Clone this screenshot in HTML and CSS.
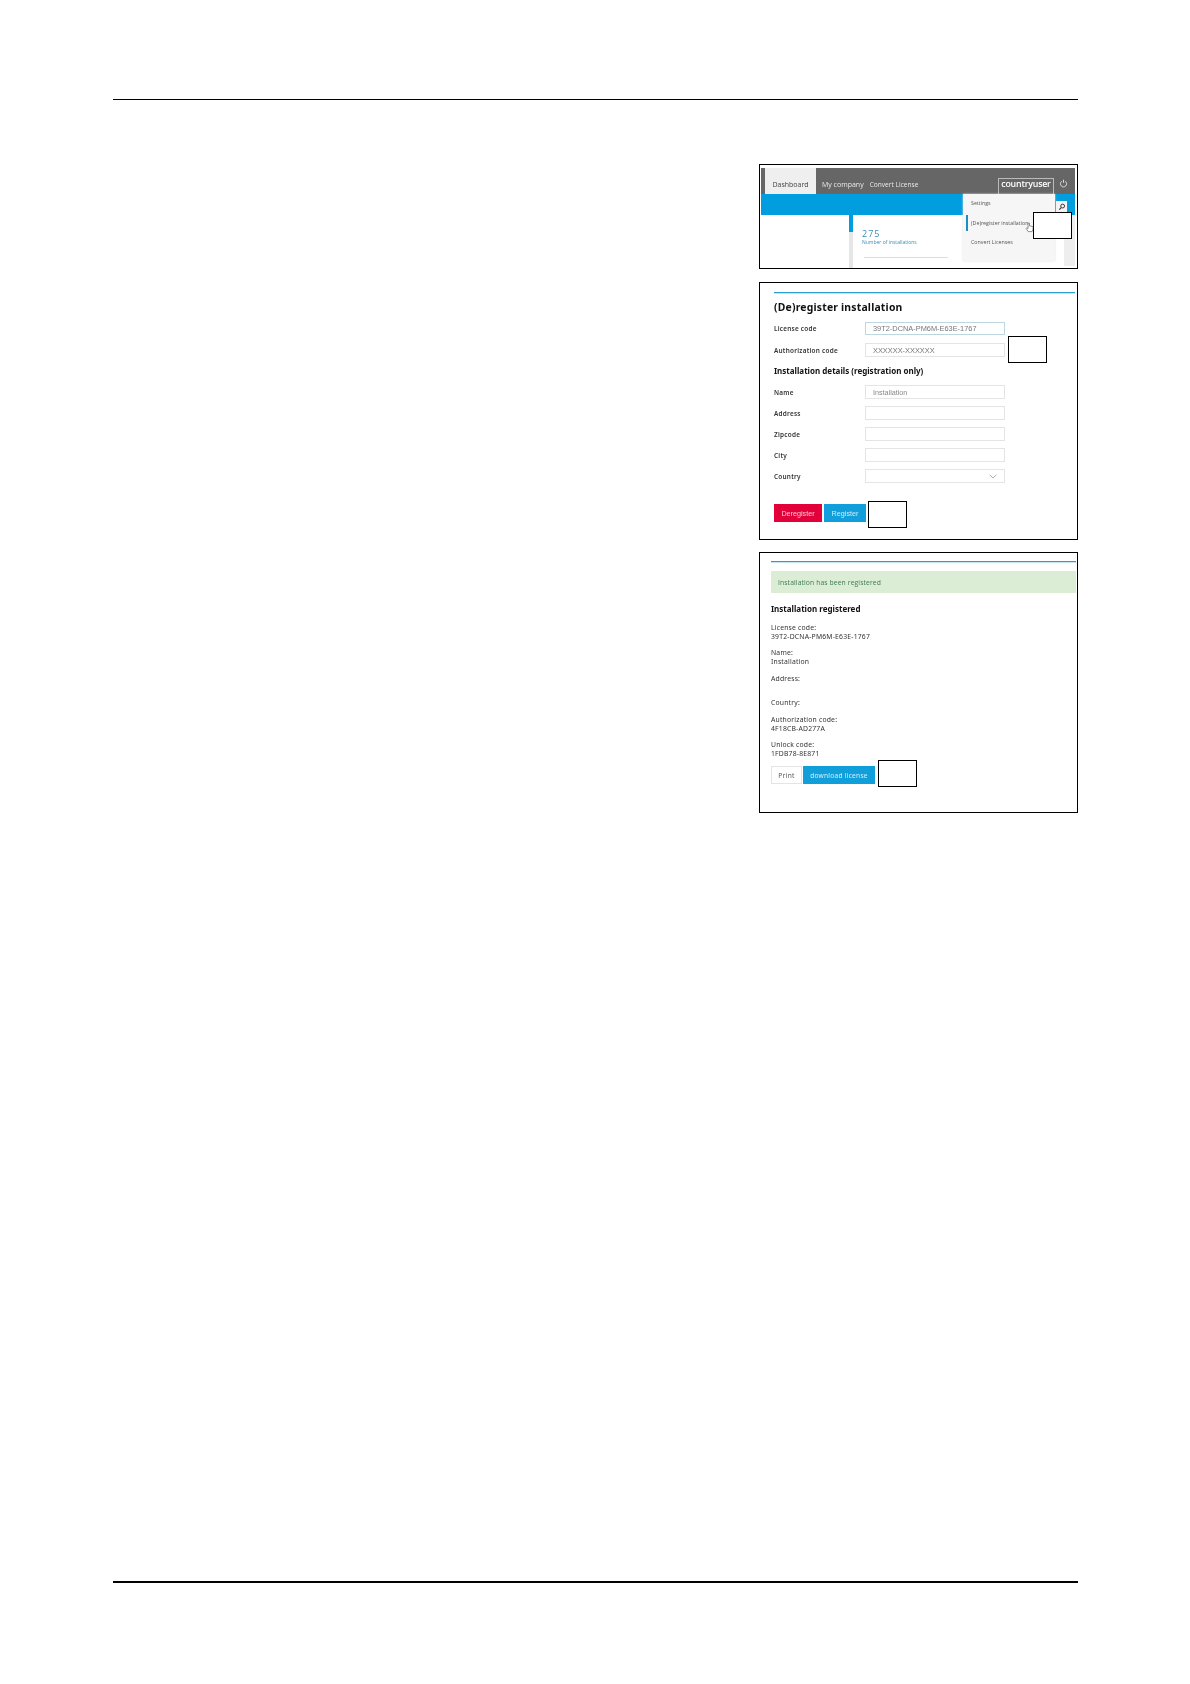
FILE: index.html
```html
<!DOCTYPE html>
<html lang="en">
<head>
<meta charset="utf-8">
<title>(De)register installation</title>
<link rel="stylesheet" href="styles.css">
</head>
<body>
<div class="page">
  <hr class="rule-top">
  <main class="shots">
    <section class="shot shot-dash">
      <div class="topbar">
        <div class="tab">Dashboard</div>
        <div class="nav">My company</div>
        <div class="nav nav-2">Convert License</div>
        <div class="user">countryuser</div>
        <svg class="power" viewBox="0 0 10 10" width="9" height="9"><path d="M3 2.6a3.4 3.4 0 1 0 4 0M5 .8v3.4" fill="none" stroke="#e8e8e8" stroke-width="1"/></svg>
      </div>
      <div class="blueband"></div>
      <div class="dash-body">
        <div class="card">
          <div class="stat">275</div>
          <div class="stat-label">Number of installations</div>
          <div class="card-line"></div>
        </div>
        <div class="side"></div>
      </div>
      <div class="menu">
        <div class="menu-item">Settings</div>
        <div class="menu-item menu-active">(De)register installation</div>
        <div class="menu-item">Convert Licenses</div>
      </div>
      <div class="search">
        <svg viewBox="0 0 10 10" width="8" height="8"><circle cx="5.8" cy="3.8" r="2.4" fill="none" stroke="#333" stroke-width="1.2"/><path d="M4 5.8 1.6 8.4" stroke="#333" stroke-width="1.4"/></svg>
      </div>
      <svg class="cursor" viewBox="0 0 10 12" width="9" height="11"><path d="M3.4 1.2v6L2 6.2 1.2 7l2.4 3.6h4.2L9 7.6V5L5 4.2V1.2z" fill="#fff" stroke="#666" stroke-width=".8"/></svg>
      <div class="callout callout-1"></div>
    </section>

    <section class="shot shot-form">
      <div class="blue-line"></div>
      <h1 class="form-title">(De)register installation</h1>
      <div class="field field-first"><label class="lbl">License code</label><div class="input input-teal">39T2-DCNA-PM6M-E63E-1767</div></div>
      <div class="field field-auth"><label class="lbl">Authorization code</label><div class="input">XXXXXX-XXXXXX</div></div>
      <h2 class="form-sub">Installation details (registration only)</h2>
      <div class="field field-name"><label class="lbl">Name</label><div class="input input-ph">Installation</div></div>
      <div class="field"><label class="lbl">Address</label><div class="input"></div></div>
      <div class="field"><label class="lbl">Zipcode</label><div class="input"></div></div>
      <div class="field"><label class="lbl">City</label><div class="input"></div></div>
      <div class="field"><label class="lbl">Country</label><div class="input input-select"><svg viewBox="0 0 8 5" width="8" height="5"><path d="M.7.8 4 4 7.3.8" fill="none" stroke="#999" stroke-width=".8"/></svg></div></div>
      <div class="form-btns">
        <div class="btn btn-red">Deregister</div>
        <div class="btn btn-blue">Register</div>
      </div>
      <div class="callout callout-2"></div>
      <div class="callout callout-3"></div>
    </section>

    <section class="shot shot-done">
      <div class="blue-line"></div>
      <div class="alert">Installation has been registered</div>
      <h2 class="done-title">Installation registered</h2>
      <p class="info">License code:<br>39T2-DCNA-PM6M-E63E-1767</p>
      <p class="info">Name:<br>Installation</p>
      <p class="info info-tall">Address:</p>
      <p class="info">Country:</p>
      <p class="info">Authorization code:<br>4F18CB-AD277A</p>
      <p class="info">Unlock code:<br>1FDB78-8E871</p>
      <div class="done-btns">
        <div class="btn btn-print">Print</div>
        <div class="btn btn-dl">download license</div>
      </div>
      <div class="callout callout-4"></div>
    </section>
  </main>
  <hr class="rule-bottom">
</div>
</body>
</html>
```

FILE: styles.css
```css
* { box-sizing: border-box; }
html, body { margin: 0; padding: 0; background: #fff; }
body { font-family: "Open Sans", "Noto Sans", sans-serif; color: #222; }
.page { width: 1190px; height: 1684px; padding: 99px 112px 0 113px; }
hr { margin: 0; border: 0; background: #000; }
.rule-top { height: 1px; }
.rule-bottom { height: 2px; margin-top: 768px; }
.shots { display: flex; flex-direction: column; align-items: flex-end; gap: 13px; padding-top: 64px; }
.shot { position: relative; width: 319px; border: 1px solid #000; background: #fff; overflow: hidden; }
.shot > *:not(.callout) { filter: blur(.4px); }
.shot-dash { height: 105px; padding: 3px 2px 0 1px; }
.shot-form { height: 258px; padding: 9px 2px 0 14px; margin-bottom: -1px; }
.shot-done { height: 261px; padding: 8px 1px 0 11px; }

/* dashboard */
.topbar { display: flex; align-items: center; height: 26px; background: #666; padding-left: 4px; color: #e9e9e9; font-size: 7px; }
.tab { width: 51px; height: 26px; background: #efefef; color: #444; text-align: center; line-height: 34px; }
.nav { margin-left: 6px; padding-top: 6px; }
.nav-2 { margin-left: 6px; font-size: 6.6px; }
.user { margin-left: auto; width: 56px; height: 16px; margin-top: 10px; border: 1px solid #bbb; border-bottom: 0; color: #fff; font-size: 8.8px; font-weight: 600; text-align: center; line-height: 11px; letter-spacing: -.2px; white-space: nowrap; }
.power { margin: 4px 7px 0 5px; }
.blueband { height: 21px; background: #009ddf; }
.dash-body { display: flex; height: 55px; padding-left: 88px; }
.card { width: 114px; height: 55px; padding: 13px 0 0 9px; border-left: 4px solid #e6e6e6; position: relative; }
.card::before { content: ""; position: absolute; left: -4px; top: 0; width: 4px; height: 17px; background: #009ddf; }
.stat { color: #3a8db5; font-size: 9px; letter-spacing: 1px; line-height: 11px; }
.stat-label { color: #3a8db5; font-size: 5px; line-height: 7px; white-space: nowrap; }
.card-line { width: 84px; height: 1px; margin-top: 11px; margin-left: 2px; background: #ddd; }
.side { width: 11px; height: 51px; margin-left: auto; background: #eee; }
.menu { position: absolute; left: 203px; top: 29px; width: 92px; height: 67px; padding-top: 0; background: #f6f6f6; box-shadow: 0 0 2px #ddd; font-size: 5.3px; color: #555; }
.menu-item { height: 19px; line-height: 19px; padding-left: 8px; white-space: nowrap; }
.menu-active { border-left: 2px solid #1a8fc4; height: 16px; line-height: 16px; margin: 2px 0 2px 3px; padding-left: 3px; }
.search { position: absolute; left: 296px; top: 36px; width: 11px; height: 11px; background: #f3f3f3; display: flex; align-items: center; justify-content: center; }
.cursor { position: absolute; left: 265px; top: 57px; }

/* callouts */
.callout { position: absolute; border: 1px solid #000; background: #fff; width: 39px; height: 27px; }
.callout-1 { left: 273px; top: 47px; }
.callout-2 { left: 248px; top: 53px; }
.callout-3 { left: 108px; top: 218px; }
.callout-4 { left: 118px; top: 207px; }

/* form */
.blue-line { height: 1px; background: #2a9fd0; box-shadow: 0 .5px 0 #8cc9e4; }
.form-title { margin: 7px 0 0; font-size: 10.4px; line-height: 15px; font-weight: 700; color: #111; letter-spacing: .2px; font-family: "Noto Sans", sans-serif; }
.field { display: flex; align-items: center; height: 14px; margin-top: 7px; }
.field-first { margin-top: 7px; height: 13px; }
.field-auth { margin-top: 8px; }
.field-name { margin-top: 8px; }
.lbl { width: 91px; font-size: 6.4px; font-weight: 600; color: #333; letter-spacing: .25px; font-family: "Noto Sans", sans-serif; }
.input { display: flex; align-items: center; width: 140px; height: 100%; padding-left: 7px; border: 1px solid #e4e4e4; font-family: "Liberation Sans", sans-serif; font-size: 7.4px; color: #777; }
.input-teal { border-color: #bcd7e0; }
.input-ph { color: #888; font-size: 7.2px; }
.input-select { justify-content: flex-end; padding-right: 7px; }
.form-sub { margin: 7px 0 7px; font-size: 8px; line-height: 14px; font-weight: 700; color: #111; letter-spacing: 0; font-family: "Noto Sans", sans-serif; }
.form-sub + .field { margin-top: 0; }
.form-btns { display: flex; gap: 2px; margin-top: 21px; }
.btn { display: flex; align-items: center; justify-content: center; height: 18px; font-size: 7.2px; white-space: nowrap; }
.btn-red { width: 48px; background: #e3003a; color: #f6c9d3; font-family: "Liberation Sans", sans-serif; }
.btn-blue { width: 42px; background: #119fdc; color: #cfeaf7; font-family: "Liberation Sans", sans-serif; }

/* result */
.alert { height: 22px; margin-top: 9px; padding-left: 7px; line-height: 24px; background: #dcedd6; color: #3f7a55; font-size: 6.8px; letter-spacing: .1px; }
.done-title { margin: 9px 0 0; font-size: 8px; line-height: 14px; font-weight: 700; color: #111; font-family: "Noto Sans", sans-serif; }
.info { margin: 7px 0 0; font-size: 6.8px; line-height: 9px; color: #333; letter-spacing: .2px; font-family: "Noto Sans", sans-serif; }
.info-tall { height: 17px; margin-top: 8px; }
.info-tall + .info + .info { margin-top: 8px; }
.done-btns { display: flex; gap: 1px; margin-top: 8px; }
.btn-print { width: 31px; background: #fff; border: 1px solid #e4e4e4; color: #555; font-size: 6.6px; letter-spacing: .3px; font-family: "Noto Sans", sans-serif; }
.btn-dl { width: 72px; background: #119fdc; color: #d7eff9; font-size: 6.6px; letter-spacing: .25px; font-family: "Noto Sans", sans-serif; }
```
